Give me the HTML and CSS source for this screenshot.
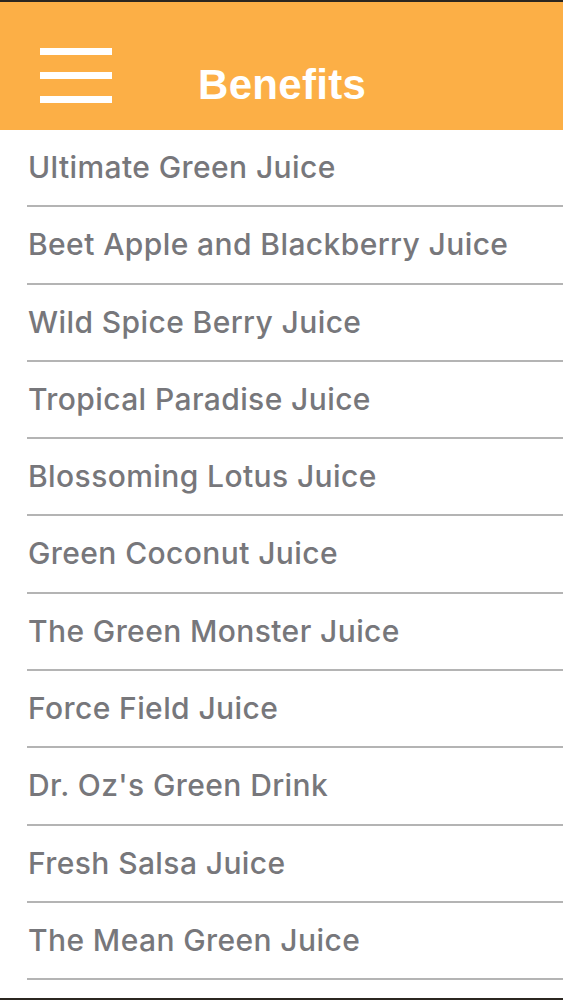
FILE: index.html
```html
<!DOCTYPE html>
<html lang="en">
<head>
  <meta charset="UTF-8">
  <meta name="viewport" content="width=device-width, initial-scale=1.0">
  <title>Benefits</title>
  <link rel="stylesheet" href="styles.css">
</head>
<body>
  <div class="screen">
    <header class="topbar">
      <button class="menu" aria-label="Menu">
        <span></span>
        <span></span>
        <span></span>
      </button>
      <h1 class="title">Benefits</h1>
    </header>

    <ul class="juices">
      <li>Ultimate Green Juice</li>
      <li>Beet Apple and Blackberry Juice</li>
      <li>Wild Spice Berry Juice</li>
      <li>Tropical Paradise Juice</li>
      <li>Blossoming Lotus Juice</li>
      <li>Green Coconut Juice</li>
      <li>The Green Monster Juice</li>
      <li>Force Field Juice</li>
      <li>Dr. Oz's Green Drink</li>
      <li>Fresh Salsa Juice</li>
      <li>The Mean Green Juice</li>
    </ul>
  </div>
</body>
</html>
```

FILE: styles.css
```css
body {
  margin: 0;
  font-family: 'Inter', 'Liberation Sans', sans-serif;
  background: #fff;
}
.screen {
  height: 1000px;
  box-sizing: border-box;
  border-top: 2px solid #2b2620;
  border-bottom: 2px solid #2b2620;
  overflow: hidden;
}
.topbar {
  height: 128px;
  background: #fcaf46;
  display: flex;
  align-items: flex-start;
}
.menu {
  background: none;
  border: none;
  padding: 0;
  margin: 46px 0 0 40px;
  display: flex;
  flex-direction: column;
  gap: 17px;
  cursor: pointer;
}
.menu span {
  display: block;
  width: 72px;
  height: 7px;
  background: #fff;
}
.title {
  margin: 62px 0 0 86px;
  font-family: 'Liberation Sans', Arial, sans-serif;
  font-size: 42px;
  line-height: 42px;
  font-weight: 700;
  letter-spacing: 0.3px;
  color: #fff;
}
.juices {
  list-style: none;
  margin: 0;
  padding: 0;
}
.juices li {
  margin-left: 27px;
  padding-left: 1px;
  height: 77.3px;
  box-sizing: border-box;
  line-height: 75px;
  border-bottom: 2px solid #b4b4b4;
  font-size: 30px;
  font-weight: 500;
  letter-spacing: 0.4px;
  color: #77777b;
  white-space: nowrap;
}
```
